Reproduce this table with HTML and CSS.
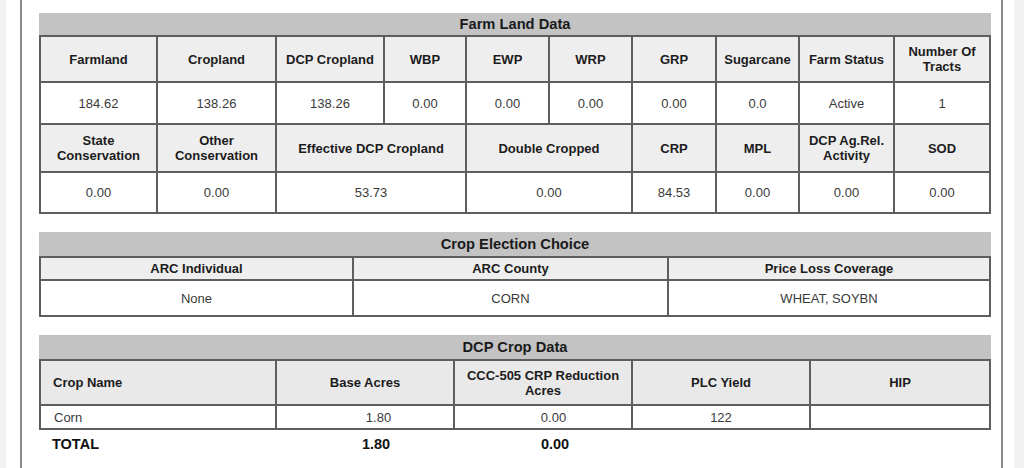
FILE: index.html
```html
<!DOCTYPE html>
<html lang="en">
<head>
<meta charset="utf-8">
<title>Farm Land Data</title>
<link rel="stylesheet" href="styles.css">
</head>
<body>
<div class="page">
  <div class="frame">
    <section class="block block-farm">
      <div class="title">Farm Land Data</div>
      <div class="grid farm">
        <div class="cell th">Farmland</div>
        <div class="cell th">Cropland</div>
        <div class="cell th">DCP Cropland</div>
        <div class="cell th">WBP</div>
        <div class="cell th">EWP</div>
        <div class="cell th">WRP</div>
        <div class="cell th">GRP</div>
        <div class="cell th">Sugarcane</div>
        <div class="cell th">Farm Status</div>
        <div class="cell th">Number Of Tracts</div>

        <div class="cell td">184.62</div>
        <div class="cell td">138.26</div>
        <div class="cell td">138.26</div>
        <div class="cell td">0.00</div>
        <div class="cell td">0.00</div>
        <div class="cell td">0.00</div>
        <div class="cell td">0.00</div>
        <div class="cell td">0.0</div>
        <div class="cell td">Active</div>
        <div class="cell td">1</div>

        <div class="cell th">State Conservation</div>
        <div class="cell th">Other Conservation</div>
        <div class="cell th span2">Effective DCP Cropland</div>
        <div class="cell th span2">Double Cropped</div>
        <div class="cell th">CRP</div>
        <div class="cell th">MPL</div>
        <div class="cell th">DCP Ag.Rel. Activity</div>
        <div class="cell th">SOD</div>

        <div class="cell td">0.00</div>
        <div class="cell td">0.00</div>
        <div class="cell td span2">53.73</div>
        <div class="cell td span2">0.00</div>
        <div class="cell td">84.53</div>
        <div class="cell td">0.00</div>
        <div class="cell td">0.00</div>
        <div class="cell td">0.00</div>
      </div>
    </section>

    <section class="block block-election">
      <div class="title">Crop Election Choice</div>
      <div class="grid election">
        <div class="cell th">ARC Individual</div>
        <div class="cell th">ARC County</div>
        <div class="cell th">Price Loss Coverage</div>
        <div class="cell td">None</div>
        <div class="cell td">CORN</div>
        <div class="cell td">WHEAT, SOYBN</div>
      </div>
    </section>

    <section class="block block-dcp">
      <div class="title">DCP Crop Data</div>
      <div class="grid dcp">
        <div class="cell th left">Crop Name</div>
        <div class="cell th">Base Acres</div>
        <div class="cell th narrow">CCC-505 CRP Reduction Acres</div>
        <div class="cell th">PLC Yield</div>
        <div class="cell th">HIP</div>
        <div class="cell td left">Corn</div>
        <div class="cell td shift-a">1.80</div>
        <div class="cell td shift-b">0.00</div>
        <div class="cell td">122</div>
        <div class="cell td"></div>
      </div>
      <div class="totals">
        <div class="tot left">TOTAL</div>
        <div class="tot shift-a">1.80</div>
        <div class="tot shift-b">0.00</div>
        <div class="tot"></div>
        <div class="tot"></div>
      </div>
    </section>
  </div>
</div>
</body>
</html>
```

FILE: styles.css
```css
* { box-sizing: border-box; }

html, body {
  margin: 0;
  padding: 0;
}

body {
  background: #f2f2f2;
  font-family: "Liberation Sans", Arial, sans-serif;
  color: #1e1e1e;
}

.page {
  display: flex;
  margin-left: 6px;
  width: 1008px;
  height: 468px;
  padding-left: 14px;
  background: #ffffff;
  overflow: hidden;
}

.frame {
  width: 983px;
  height: 468px;
  background: #ffffff;
  border-left: 2px solid #8c8c8c;
  border-right: 2px solid #8c8c8c;
  padding: 13px 0 0 17px;
  display: flex;
  flex-direction: column;
}

.block {
  width: 952px;
}

.block-election { margin-top: 18px; }
.block-dcp { margin-top: 18px; }

.title {
  background: #c3c3c3;
  height: 22px;
  line-height: 22px;
  text-align: center;
  font-weight: bold;
  font-size: 14.7px;
  color: #1a1a1a;
}

.block-election .title,
.block-dcp .title {
  height: 24px;
  line-height: 25px;
}

.grid {
  display: grid;
  border-left: 2px solid #5e5e5e;
  border-top: 2px solid #5e5e5e;
}

.farm {
  grid-template-columns: 117px 119px 108px 82px 83px 83px 84px 83px 95px 96px;
  grid-template-rows: 46px 42px 48px 41px;
}

.election {
  grid-template-columns: 313px 315px 322px;
  grid-template-rows: 23px 36px;
}

.dcp {
  grid-template-columns: 236px 178px 178px 178px 180px;
  grid-template-rows: 45px 24px;
}

.cell {
  display: flex;
  align-items: center;
  justify-content: center;
  text-align: center;
  border-right: 2px solid #5e5e5e;
  border-bottom: 2px solid #5e5e5e;
  font-size: 13px;
  line-height: 15px;
  padding: 0 3px;
}

.th {
  background: #eeeeee;
  font-weight: bold;
  color: #1c1c1c;
}

.dcp .th { background: #e9e9e9; }

.td {
  background: #ffffff;
  color: #3a3a3a;
}

.span2 { grid-column: span 2; }

.left {
  justify-content: flex-start;
  text-align: left;
  padding-left: 12px;
}

.dcp .td.left { padding-left: 13px; }

.narrow { padding: 0 10px; }

.shift-a { padding-left: 30px; }
.shift-b { padding-left: 24px; }

.totals {
  display: grid;
  grid-template-columns: 238px 178px 178px 178px 180px;
  height: 26px;
}

.tot {
  display: flex;
  align-items: center;
  justify-content: center;
  font-weight: bold;
  font-size: 14.5px;
  color: #111111;
  padding-top: 2px;
}

.tot.left {
  justify-content: flex-start;
  padding-left: 13px;
}

.tot.shift-a { padding-left: 20px; }
.tot.shift-b { padding-left: 22px; }
```
